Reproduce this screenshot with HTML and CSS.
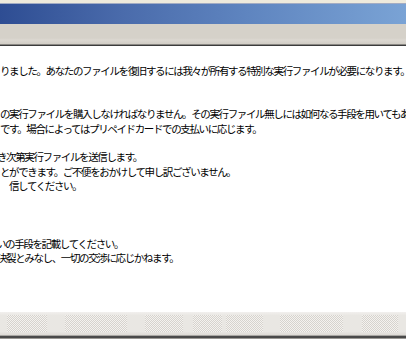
FILE: index.html
```html
<!DOCTYPE html>
<html lang="ja">
<head>
<meta charset="utf-8">
<link rel="stylesheet" href="styles.css">
</head>
<body>
<div class="window">
  <div class="topline"></div>
  <div class="titlebar"></div>
  <div class="toolbar"></div>
  <div class="content">
    <p class="line">りました。あなたのファイルを復旧するには我々が所有する特別な実行ファイルが必要になります。</p>
    <p class="line blank"></p>
    <p class="line blank"></p>
    <p class="line">の実行ファイルを購入しなければなりません。その実行ファイル無しには如何なる手段を用いてもあなたのファイルを復旧することはできません。</p>
    <p class="line">です。場合によってはプリペイドカードでの支払いに応じます。</p>
    <p class="line blank"></p>
    <p class="line cut3">き次第実行ファイルを送信します。</p>
    <p class="line">とができます。ご不便をおかけして申し訳ございません。</p>
    <p class="line indent">信してください。</p>
    <p class="line blank"></p>
    <p class="line blank"></p>
    <p class="line blank"></p>
    <p class="line cut4">いの手段を記載してください。</p>
    <p class="line cut3">決裂とみなし、一切の交渉に応じかねます。</p>
  </div>
  <div class="statusbar">
    <span class="dots d1"></span>
    <span class="dots d2"></span>
    <span class="dots d3"></span>
    <span class="dots d4"></span>
    <span class="dots d5"></span>
    <span class="dots d6"></span>
    <span class="dots d7"></span>
  </div>
  <div class="bottom"></div>
</div>
</body>
</html>
```
FILE: styles.css
```css
html, body {
  margin: 0;
  padding: 0;
  width: 406px;
  height: 339px;
  overflow: hidden;
  background: #ffffff;
}

.window {
  display: flex;
  flex-direction: column;
  width: 406px;
  height: 339px;
  font-family: "Noto Sans CJK JP", "Noto Sans", sans-serif;
}

.topline {
  height: 3px;
  background: #eeeadc;
  border-bottom: 1px solid #a3acc3;
}

.titlebar {
  height: 20px;
  background: linear-gradient(to right, #2e4d93 0%, #4a6bab 30%, #5e84bf 60%, #7aa3d5 100%);
}

.toolbar {
  height: 20px;
  background: linear-gradient(to bottom, #d5d1c9 0%, #d5d1c9 70%, #dcd8d1 80%, #d2cec6 100%);
  border-bottom: 1px solid #8a8884;
  box-shadow: 0 1px 0 #3c3c3c;
  margin-bottom: 1px;
}

.content {
  flex: 1;
  overflow: hidden;
  padding-top: 18px;
  background: #ffffff;
}

.line {
  margin: 0;
  height: 14.4px;
  line-height: 14.4px;
  font-size: 10.5px;
  letter-spacing: -1.38px;
  color: #000000;
  white-space: nowrap;
}

.indent { text-indent: 9px; }
.cut3 { text-indent: -3px; }
.cut4 { text-indent: -4px; }

.statusbar {
  position: relative;
  height: 23px;
  background: linear-gradient(to bottom, #f2f0ee 0%, #e9e7e3 15%, #e9e7e3 85%, #dedbd6 100%);
}

.dots {
  position: absolute;
  top: 3px;
  height: 17px;
  background: repeating-conic-gradient(#d6d3ce 0 25%, #f4f2ef 0 50%) 0 0 / 2px 2px;
}
.d1 { left: 7px; width: 40px; }
.d2 { left: 65px; width: 62px; }
.d3 { left: 145px; width: 38px; }
.d4 { left: 193px; width: 29px; }
.d5 { left: 226px; width: 37px; }
.d6 { left: 280px; width: 63px; }
.d7 { left: 362px; width: 36px; }

.bottom {
  height: 4px;
  border-top: 1px solid #a8a6a2;
  background: linear-gradient(to bottom, #4a4a4a 0 2px, #9a9894 2px);
  box-sizing: border-box;
}
```
